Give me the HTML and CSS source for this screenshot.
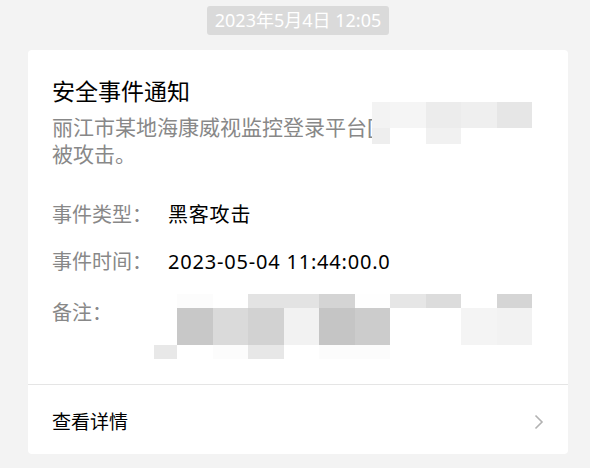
FILE: index.html
```html
<!DOCTYPE html>
<html lang="zh-CN">
<head>
    <meta charset="UTF-8">
    <meta name="viewport" content="width=device-width, initial-scale=1.0">
    <title>安全事件通知</title>
    <link rel="stylesheet" href="styles.css">
</head>
<body>
    <div class="chat">
        <div class="time-wrap">
            <span class="time-badge">2023年5月4日 12:05</span>
        </div>

        <div class="card">
            <div class="card-body">
                <h1 class="card-title">安全事件通知</h1>
                <p class="card-desc">
                    丽江市某地海康威视监控登录平台[<br>被攻击。
                    <span class="mosaic mosaic-desc">
                        <i style="background:#f3f3f3"></i><i style="background:#f5f5f5"></i><i style="background:#ececec"></i><i style="background:#efefef"></i><i style="background:#e6e6e6"></i>
                        <i style="background:#eeeeee"></i><i></i><i style="background:#f1f1f1"></i><i></i><i></i>
                    </span>
                </p>

                <div class="rows">
                    <div class="row">
                        <span class="label">事件类型：</span>
                        <span class="value">黑客攻击</span>
                    </div>
                    <div class="row">
                        <span class="label">事件时间：</span>
                        <span class="value">2023-05-04 11:44:00.0</span>
                    </div>
                    <div class="row row-note">
                        <span class="label">备注：</span>
                        <div class="mosaic mosaic-note">
                            <i></i><i style="background:#fcfcfc"></i><i></i><i style="background:#e3e3e3"></i><i style="background:#e3e3e3"></i><i style="background:#d4d4d4"></i><i style="background:#fefefe"></i><i style="background:#e6e6e6"></i><i style="background:#dcdcdc"></i><i></i><i style="background:#d5d5d5"></i>
                            <i></i><i style="background:#c8c8c8"></i><i style="background:#dadada"></i><i style="background:#d2d2d2"></i><i style="background:#f2f2f2"></i><i style="background:#c5c5c5"></i><i style="background:#cccccc"></i><i></i><i></i><i style="background:#f4f4f4"></i><i style="background:#f2f2f2"></i>
                            <i style="background:#e8e8e8"></i><i></i><i style="background:#fcfcfc"></i><i style="background:#e7e7e7"></i><i></i><i style="background:#fcfcfc"></i><i style="background:#fcfcfc"></i><i></i><i></i><i></i><i></i>
                        </div>
                    </div>
                </div>
            </div>

            <div class="card-footer">
                <span>查看详情</span>
                <svg class="chevron" width="10" height="16" viewBox="0 0 10 16">
                    <path d="M1.5 1.5 L8 8 L1.5 14.5" fill="none" stroke="#b2b2b2" stroke-width="1.6"/>
                </svg>
            </div>
        </div>
    </div>
</body>
</html>
```

FILE: styles.css
```css
body {
    margin: 0;
    background-color: #f3f3f3;
    font-family: "Noto Sans", "Noto Sans CJK SC", sans-serif;
    color: #000;
}
.chat {
    padding: 6px 22px 0 28px;
}
.time-wrap {
    text-align: center;
}
.time-badge {
    display: inline-block;
    background-color: #dadada;
    color: #fff;
    font-size: 18px;
    line-height: 29px;
    padding: 0 8px;
    border-radius: 3px;
}
.card {
    margin-top: 15px;
    background-color: #fff;
    border-radius: 4px;
}
.card-body {
    padding: 26px 24px 25px;
}
.card-title {
    margin: 0;
    font-size: 23px;
    font-weight: normal;
    line-height: 30px;
}
.card-desc {
    position: relative;
    margin: 8px 0 0;
    color: #888;
    font-size: 21px;
    line-height: 27px;
}
.mosaic {
    display: grid;
}
.mosaic i {
    display: block;
    background: #fff;
}
.mosaic-desc {
    position: absolute;
    left: 320px;
    top: -12px;
    grid-template-columns: 18px repeat(4, 35.5px);
    grid-template-rows: 26px 16px;
}
.rows {
    margin-top: 32px;
    display: flex;
    flex-direction: column;
    gap: 17px;
}
.row {
    display: flex;
    font-size: 20px;
    line-height: 30px;
}
.label {
    width: 116px;
    flex-shrink: 0;
    color: #888;
}
.value {
    letter-spacing: 0.8px;
}
.row-note .label {
    padding-top: 4px;
}
.mosaic-note {
    margin-left: -14px;
    grid-template-columns: 23px repeat(10, 35.5px);
    grid-template-rows: 14px 37px 14px;
}
.card-footer {
    border-top: 1px solid #e5e5e5;
    padding: 22px 24px 17px;
    display: flex;
    justify-content: space-between;
    align-items: center;
    font-size: 19px;
    line-height: 30px;
}
.chevron {
    display: block;
}
```
